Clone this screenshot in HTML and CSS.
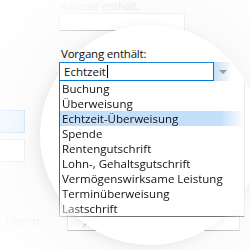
FILE: index.html
```html
<!DOCTYPE html>
<html lang="de">
<head>
    <meta charset="UTF-8">
    <meta name="viewport" content="width=device-width, initial-scale=1.0">
    <title>Vorgang enthält</title>
    <link rel="stylesheet" href="styles.css">
</head>
<body>
    <div class="stage">
        <div class="ghost">
            <div class="ghost-label">Adresse enthält:</div>
            <div class="ghost-input"></div>
            <div class="ghost-side">
                <div class="ghost-box selected"></div>
                <div class="ghost-box"></div>
            </div>
            <div class="ghost-footer">
                <span class="ghost-text">Filtern</span>
                <div class="ghost-button">Anwenden</div>
                <div class="ghost-button"></div>
            </div>
        </div>
        <div class="veil"></div>
        <div class="lens"></div>

        <div class="field">
            <div class="field-label">Vorgang enthält:</div>
            <div class="combo">
                <div class="combo-input">Echtzeit<span class="caret"></span></div>
                <div class="combo-button">
                    <svg width="8" height="4" viewBox="0 0 8 4"><path d="M0 0h8L4 4z" fill="#9a9a9a"/></svg>
                </div>
                <ul class="combo-list">
                    <li>Buchung</li>
                    <li>Überweisung</li>
                    <li class="active">Echtzeit-Überweisung</li>
                    <li>Spende</li>
                    <li>Rentengutschrift</li>
                    <li>Lohn-, Gehaltsgutschrift</li>
                    <li>Vermögenswirksame Leistung</li>
                    <li>Terminüberweisung</li>
                    <li>Lastschrift</li>
                </ul>
            </div>
        </div>
    </div>
</body>
</html>
```

FILE: styles.css
```css
body {
    margin: 0;
    font-family: "Open Sans", "Noto Sans", sans-serif;
    font-size: 11.5px;
    color: #111;
}

.stage {
    position: relative;
    width: 250px;
    height: 250px;
    overflow: hidden;
    background: #fff;
}

/* faded dialog behind the lens */
.ghost {
    position: absolute;
    inset: 0;
    background: #f6f6f6;
}

.ghost-label {
    margin: 0 0 0 60px;
    height: 13px;
    line-height: 13px;
    font-size: 10.5px;
    color: #cfcfcf;
}

.ghost-input {
    margin: 0 0 0 59px;
    width: 124px;
    height: 16px;
    background: #fff;
    border: 1px solid #e2e2e2;
    border-bottom-color: #999;
}

.ghost-side {
    display: flex;
    flex-direction: column;
    gap: 6px;
    margin-top: 79px;
    width: 25px;
}

.ghost-box {
    height: 21px;
    background: #fdfdfd;
    border: 1px solid #dadada;
    border-left: none;
}

.ghost-box.selected {
    background: #d3e8fc;
    border-color: #9cc8f2;
}

.ghost-footer {
    display: flex;
    align-items: flex-start;
    margin-top: 50px;
}

.ghost-text {
    width: 68px;
    padding: 1px 0 0 5px;
    box-sizing: border-box;
    color: #c8c8c8;
}

.ghost-button {
    width: 80px;
    height: 14px;
    margin: 3px 10px 0 0;
    background: #fff;
    border: 1px solid #d6d6d6;
    border-bottom-color: #888;
    color: #aaa;
    font-size: 10px;
    line-height: 14px;
    text-align: center;
}

.veil {
    position: absolute;
    inset: 0;
    background: radial-gradient(circle at 150px 135px, rgba(255, 255, 255, 0.4) 110px, rgba(255, 255, 255, 0.8) 150px, #fff 195px);
}

.lens {
    position: absolute;
    left: 40px;
    top: 25px;
    width: 220px;
    height: 220px;
    border-radius: 50%;
    background: #fff;
    box-shadow: -3px 2px 12px rgba(0, 0, 0, 0.07);
}

/* the real combo box */
.field {
    position: relative;
    z-index: 2;
    padding: 46px 0 0 59px;
}

.field-label {
    height: 16px;
    line-height: 16px;
    padding-left: 2px;
    letter-spacing: -0.2px;
}

.combo {
    position: relative;
    display: flex;
    width: 173px;
    height: 19px;
}

.combo-input {
    display: flex;
    align-items: center;
    width: 155px;
    padding-left: 4px;
    background: #fff;
    border: 1px solid #0078d7;
    border-top-color: #1a86dc;
    box-sizing: border-box;
}

.caret {
    width: 1px;
    height: 13px;
    margin-left: 1px;
    background: #000;
}

.combo-button {
    display: flex;
    align-items: center;
    justify-content: center;
    width: 18px;
    background: linear-gradient(to right, #c5e0f8, #e9f3fc 70%, #fff);
}

.combo-list {
    position: absolute;
    top: 100%;
    left: 0;
    width: 186px;
    margin: 0;
    padding: 0;
    list-style: none;
    background: #fff;
    border-left: 1px solid #5f5f5f;
    border-right: 1px solid #ececec;
    border-bottom: 1px solid #707070;
    box-sizing: border-box;
    -webkit-mask-image: radial-gradient(circle at 100px 30px, #000 122px, transparent 152px);
    mask-image: radial-gradient(circle at 100px 30px, #000 122px, transparent 152px);
}

.combo-list li {
    height: 15px;
    line-height: 15px;
    padding-left: 2px;
    white-space: nowrap;
}

.combo-list li.active {
    background: linear-gradient(to right, #c3dff9 160px, #fff);
}
```
